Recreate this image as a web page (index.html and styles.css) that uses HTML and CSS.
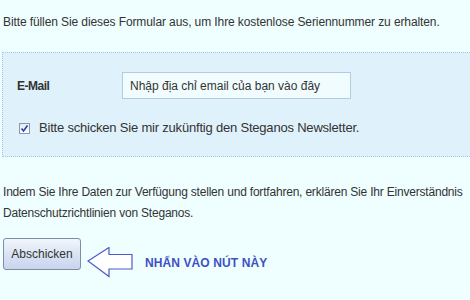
FILE: index.html
```html
<!DOCTYPE html>
<html lang="de">
<head>
<meta charset="utf-8">
<link rel="stylesheet" href="styles.css">
</head>
<body>
<div class="page">
  <p class="intro">Bitte füllen Sie dieses Formular aus, um Ihre kostenlose Seriennummer zu erhalten.</p>
  <div class="box">
    <div class="field-row">
      <label class="field-label" for="email">E-Mail</label>
      <input class="field-input" id="email" type="text" value="Nhập địa chỉ email của bạn vào đây">
    </div>
    <label class="check-row">
      <span class="check-box">
        <svg viewBox="0 0 11 11" width="11" height="11"><path d="M2.5 5.5 L4.5 8 L8.5 2.5" fill="none" stroke="#2b3fb0" stroke-width="1.6"/></svg>
      </span>
      <span>Bitte schicken Sie mir zukünftig den Steganos Newsletter.</span>
    </label>
  </div>
  <p class="consent">Indem Sie Ihre Daten zur Verfügung stellen und fortfahren, erklären Sie Ihr Einverständnis<br>Datenschutzrichtlinien von Steganos.</p>
  <div class="actions">
    <button class="submit" type="button">Abschicken</button>
    <svg class="arrow" viewBox="0 0 46 31" width="46" height="31">
      <path d="M1 14 L22 0.5 L22 7.5 L45 7.5 L45 22 L22 22 L22 29.5 Z" fill="#ffffff" stroke="#4a5ccc" stroke-width="1.2" stroke-linejoin="miter"/>
    </svg>
    <span class="hint">NHẤN VÀO NÚT NÀY</span>
  </div>
</div>
</body>
</html>
```
FILE: styles.css
```css
html, body {
  margin: 0;
  padding: 0;
  background: #effefe;
}
body {
  font-family: "Liberation Sans", Arial, sans-serif;
  color: #333333;
  font-size: 12px;
}
.page {
  padding: 15px 0 0 3px;
}
.intro {
  margin: 0;
  line-height: 14px;
  letter-spacing: -0.1px;
  white-space: nowrap;
}
.box {
  margin: 23px 0 0 -1px;
  background: #dff1fb;
  border-top: 1px dotted #a8c6df;
  border-left: 1px dotted #a8c6df;
  border-bottom: 1px dotted #a8c6df;
  padding: 19px 0 20px 14px;
}
.field-row {
  display: flex;
  align-items: center;
  height: 27px;
}
.field-label {
  width: 105px;
  font-weight: bold;
  font-size: 12px;
  letter-spacing: -0.5px;
}
.field-input {
  box-sizing: border-box;
  width: 229px;
  height: 27px;
  margin: 0;
  padding: 0 7px;
  border: 1px solid #b6cbe0;
  background: #f1fcff;
  font-family: "Liberation Sans", Arial, sans-serif;
  font-size: 12px;
  color: #333333;
  outline: none;
}
.check-row {
  display: flex;
  align-items: center;
  gap: 9px;
  margin-top: 21px;
  padding-left: 2px;
  font-size: 13px;
  line-height: 16px;
  letter-spacing: -0.2px;
  white-space: nowrap;
}
.check-box {
  display: inline-flex;
  width: 11px;
  height: 11px;
  box-sizing: border-box;
  border: 1px solid #8a99b0;
  background: linear-gradient(#e6ebf3, #ffffff);
}
.check-box svg {
  display: block;
  margin: -1px;
}
.consent {
  margin: 25px 0 0 0;
  line-height: 21px;
  letter-spacing: -0.2px;
  white-space: nowrap;
}
.actions {
  display: flex;
  align-items: center;
  margin-top: 14px;
}
.submit {
  box-sizing: border-box;
  width: 78px;
  height: 32px;
  margin: 0;
  padding: 0;
  border: 1px solid #7e8ca4;
  border-radius: 3px;
  background: linear-gradient(#f2f6fc, #d9e2f3 55%, #c9d5ee);
  font-family: "Liberation Sans", Arial, sans-serif;
  font-size: 12px;
  color: #333333;
  align-self: flex-start;
}
.arrow {
  display: block;
  margin-left: 6px;
  margin-top: 9px;
}
.hint {
  margin-left: 12px;
  margin-top: 9px;
  font-weight: bold;
  font-size: 12px;
  color: #3d50c6;
  letter-spacing: 0.1px;
  white-space: nowrap;
}
```
